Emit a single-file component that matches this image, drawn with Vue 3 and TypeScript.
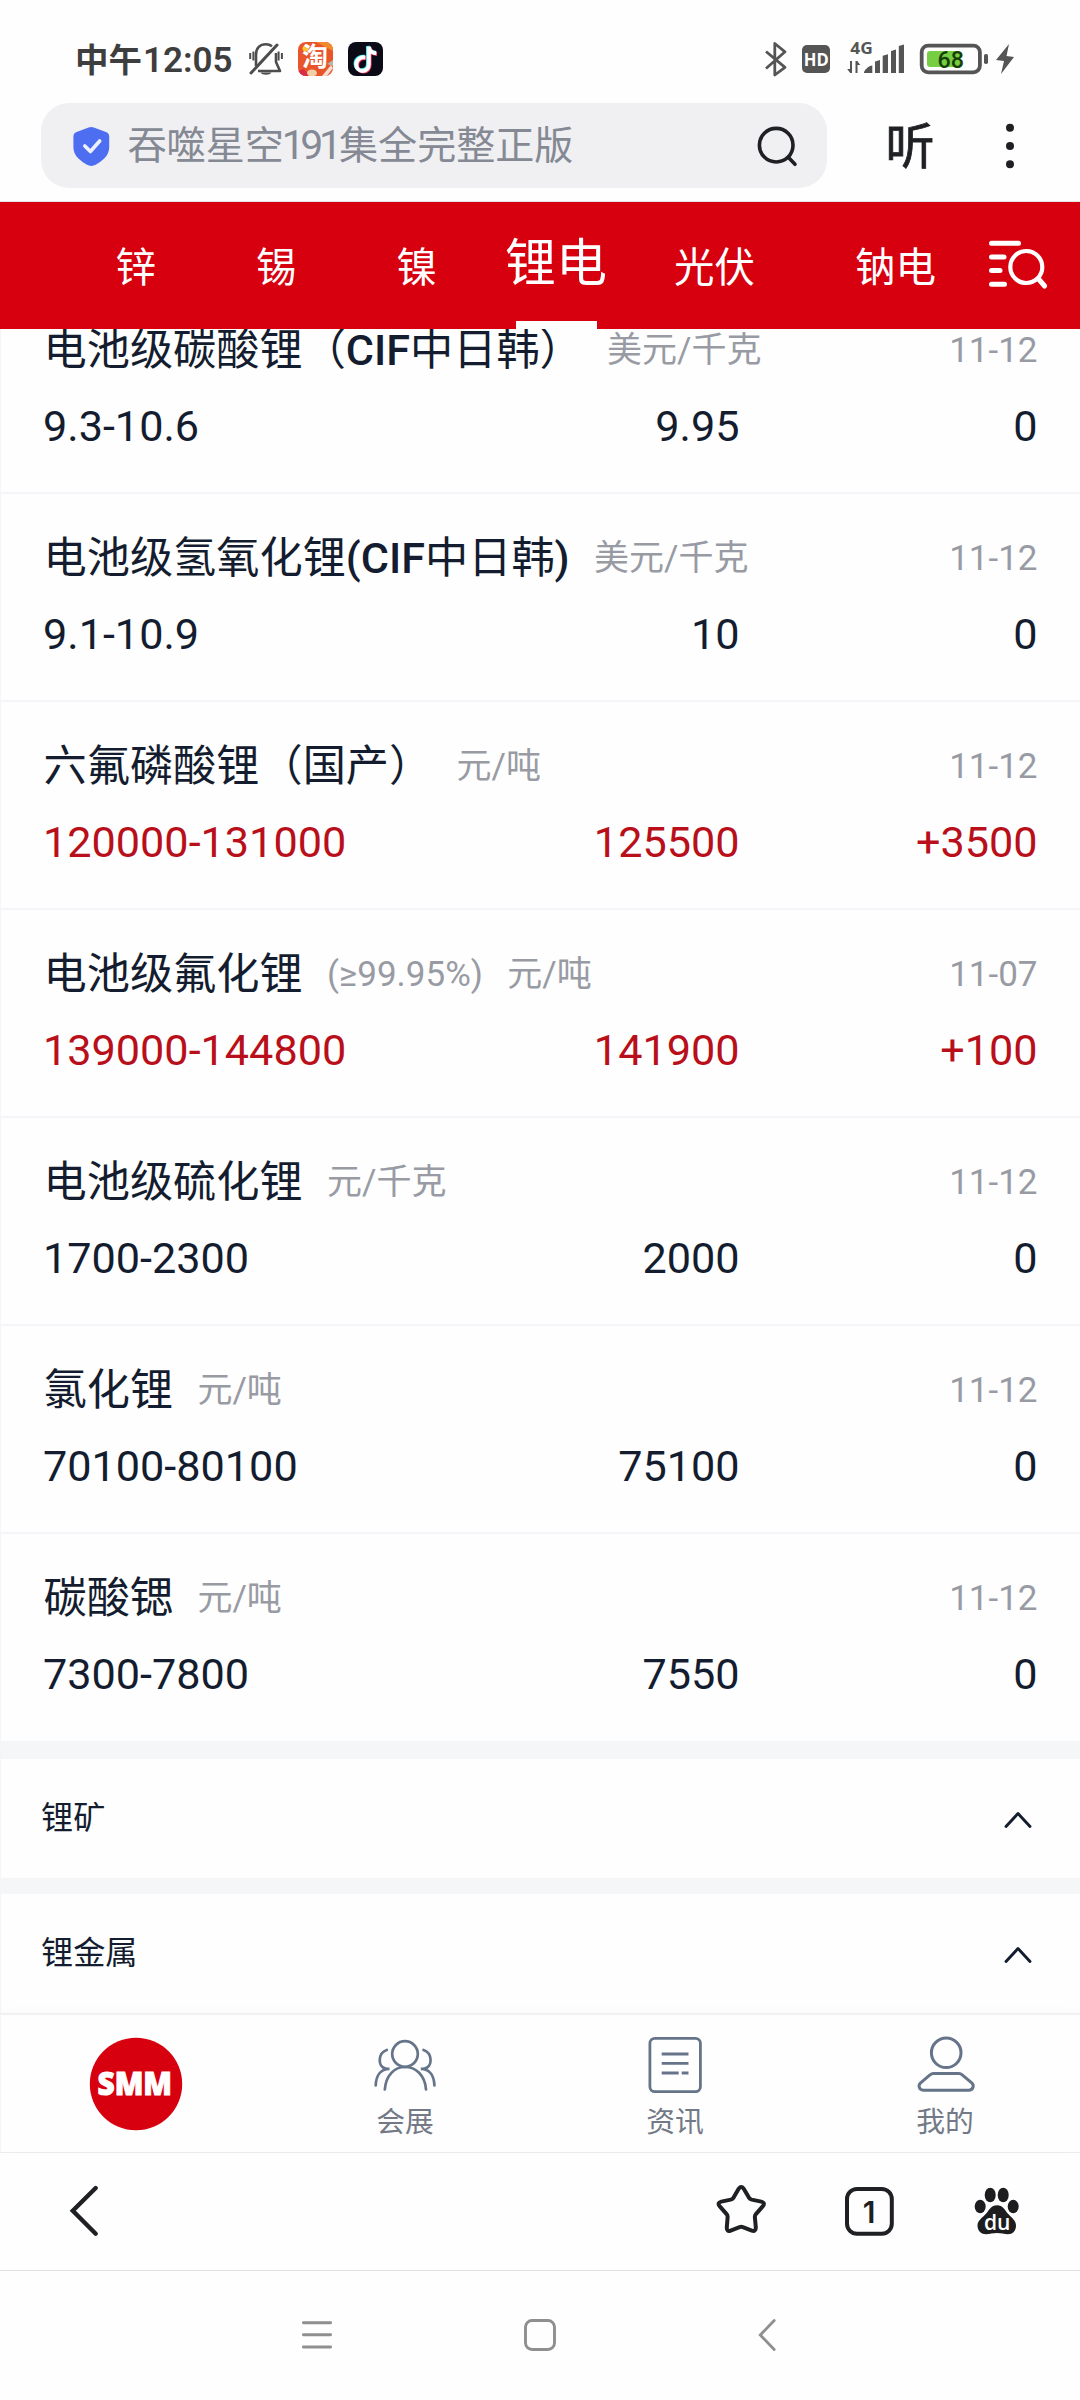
<script setup lang="ts">
interface PriceRow {
  name: string
  spec?: string
  unit: string
  date: string
  range: string
  average: string
  change: string
  rising?: boolean
}

const tabs: string[] = ['锌', '锡', '镍', '锂电', '光伏', '钠电']
const activeTab = '锂电'

const rows: PriceRow[] = [
  { name: '电池级碳酸锂（CIF中日韩）', unit: '美元/千克', date: '11-12', range: '9.3-10.6', average: '9.95', change: '0' },
  { name: '电池级氢氧化锂(CIF中日韩)', unit: '美元/千克', date: '11-12', range: '9.1-10.9', average: '10', change: '0' },
  { name: '六氟磷酸锂（国产）', unit: '元/吨', date: '11-12', range: '120000-131000', average: '125500', change: '+3500', rising: true },
  { name: '电池级氟化锂', spec: '(≥99.95%)', unit: '元/吨', date: '11-07', range: '139000-144800', average: '141900', change: '+100', rising: true },
  { name: '电池级硫化锂', unit: '元/千克', date: '11-12', range: '1700-2300', average: '2000', change: '0' },
  { name: '氯化锂', unit: '元/吨', date: '11-12', range: '70100-80100', average: '75100', change: '0' },
  { name: '碳酸锶', unit: '元/吨', date: '11-12', range: '7300-7800', average: '7550', change: '0' },
]

const sections: string[] = ['锂矿', '锂金属']

// Latin runs in product names are set heavier than the Chinese characters
function nameParts(name: string): { text: string; latin: boolean }[] {
  return name
    .split(/([A-Za-z()]+)/)
    .filter(Boolean)
    .map((text) => ({ text, latin: /[A-Za-z()]/.test(text) }))
}
</script>

<template>
  <div class="screen">
    <header class="status">
      <div class="status-left">
        <span class="time">中午<span class="clock">12:05</span></span>
        <svg class="bell" width="34" height="34" viewBox="249 42 34 34" fill="none" stroke="#4d4d4d" stroke-width="2.6">
          <path d="M256 66V55C256 48 260 44.200 266 44.200C268.500 44.200 270.500 45 272 46.200M276 53V62L280 71H258" stroke-linejoin="round" />
          <path d="M251 73L277 45" stroke-linecap="round" stroke-width="3" />
          <path d="M250.200 53v6M253.400 51.500v9M278.600 51.500v9M281.900 53v6" stroke-width="2" />
          <path d="M260.500 72.500h11c-1.500 3-9.500 3-11 0z" fill="#4d4d4d" stroke="none" />
        </svg>
        <svg class="app" width="35" height="34" viewBox="0 0 35 34">
          <defs><clipPath id="appClip"><rect width="35" height="34" rx="8" /></clipPath></defs>
          <g clip-path="url(#appClip)">
            <rect width="35" height="34" fill="#e8552b" />
            <path d="M18 0H35V9z" fill="#f08a2c" />
            <circle cx="7.500" cy="6.500" r="3" fill="#fbc531" />
            <path d="M0 29l6-2 5 7H0z" fill="#d92b45" />
            <ellipse cx="14" cy="31" rx="5" ry="3.500" fill="#f2cfa4" />
            <path d="M24 34l9-11 2 3-6 8z" fill="#f7dcd0" />
            <path d="M29 22l6-4v6z" fill="#b9b2ae" />
          </g>
          <text x="4" y="24" font-size="26" fill="#fff" class="cjk-heavy">淘</text>
        </svg>
        <svg class="app" width="35" height="34" viewBox="0 0 35 34">
          <rect width="35" height="34" rx="8" fill="#0b0b17" />
          <g fill="none" stroke-width="4">
            <path d="M16.500 14.800c-5-.8-9 2.300-9 6.900 0 4 3 6.500 6.300 6.500 4 0 6.200-3 6.200-6.600V4c.6 4 3.500 6.300 7.500 6.500" stroke="#25e5e8" />
            <path d="M18.100 16.200c-5-.8-9 2.300-9 6.900 0 4 3 6.500 6.300 6.500 4 0 6.200-3 6.200-6.600V5.500c.6 4 3.500 6.300 7.500 6.500" stroke="#f5355d" />
            <path d="M17.300 15.500c-5-.8-9 2.300-9 6.900 0 4 3 6.500 6.300 6.500 4 0 6.200-3 6.200-6.600V4.700c.6 4 3.500 6.300 7.500 6.500" stroke="#fff" />
          </g>
        </svg>
      </div>
      <div class="status-right">
        <svg width="254" height="54" viewBox="762 32 254 54">
          <path d="M766 51.500L785 67.300L774.800 75V43.500L785 51.800L766 68.500" fill="none" stroke="#555" stroke-width="2.800" stroke-linejoin="round" />
          <rect x="802" y="45" width="28" height="28" rx="5" fill="#555" />
          <text x="803.800" y="66" font-size="18.500" textLength="25" lengthAdjust="spacingAndGlyphs" class="latin-bold" fill="#fff">HD</text>
          <text x="850.300" y="54.300" font-size="15.500" textLength="22.500" lengthAdjust="spacingAndGlyphs" class="latin-bold" fill="#555">4G</text>
          <path d="M852 61v12h-1.800l-3-4h2.800v-8zM855.500 73V61h1.800l3 4h-2.800v8z" fill="#555" />
          <path d="M864 73c0-3 5-7.500 8.300-7.500V73zM875 73V61.500l5-1.500v13zM882.700 73V55.700l5.300-1.500V73zM891 73V51l5-1.500V73zM898.800 73V46l5.200-1.600V73z" fill="#555" />
          <rect x="921.700" y="45.600" width="58.200" height="26.700" rx="6.500" fill="none" stroke="#555" stroke-width="3.800" />
          <rect x="927" y="51" width="33" height="16" rx="3" fill="#76cf42" />
          <rect x="984" y="54" width="4" height="10" rx="1.700" fill="#555" />
          <text x="937.500" y="68" font-size="23" textLength="26.500" lengthAdjust="spacingAndGlyphs" class="battery-text" fill="#173f05">68</text>
          <path d="M1009 44l-13 16 8 1-3 13 13-17-7.500-1z" fill="#555" />
        </svg>
      </div>
    </header>

    <div class="browser-top">
      <div class="search">
        <svg width="36" height="40" viewBox="73 126 36 40">
          <path d="M88.600 127.500q2.600-.9 5.200 0L106 132q3.200 1.200 3.200 4.600V147q0 7-5 11.500-4 3.800-8.500 6.300-4.400 2.200-8.800 0-4.500-2.500-8.500-6.300-5-4.500-5-11.500v-10.400q0-3.400 3.200-4.600z" fill="#4e6ef2" />
          <path d="M84.800 146l5.600 5.500L99.700 141" fill="none" stroke="#edf0fd" stroke-width="3.600" stroke-linecap="round" stroke-linejoin="round" />
        </svg>
        <span class="query">吞噬星空<span class="num">191</span>集全完整正版</span>
        <svg width="42" height="42" viewBox="756 124 42 42" fill="none" stroke="#1f2024" stroke-width="3.600" stroke-linecap="round">
          <circle cx="776.200" cy="144.200" r="16.800" />
          <path d="M788.500 156.500l6.500 6.800" />
        </svg>
      </div>
      <span class="listen">听</span>
      <svg class="dots" width="12" height="48" viewBox="0 0 12 48" fill="#1f2024">
        <circle cx="6" cy="5.700" r="4" /><circle cx="6" cy="24" r="4" /><circle cx="6" cy="42.300" r="4" />
      </svg>
    </div>

    <nav class="tabs">
      <div v-for="tab in tabs" :key="tab" class="tab" :class="{ active: tab === activeTab }">
        <span>{{ tab }}</span>
      </div>
      <svg class="filter" width="62" height="52" viewBox="988 239 62 52" fill="none" stroke="#fff" stroke-linecap="round">
        <path d="M992.500 243.300h27M992.500 257h12.500M992.500 270.500h8.500M992.500 284.300h13" stroke-width="5" />
        <circle cx="1027.300" cy="267" r="16" stroke-width="4.200" />
        <path d="M1040 279.500l5.600 6.500" stroke-width="5" />
      </svg>
    </nav>

    <main class="content">
      <section v-for="row in rows" :key="row.name" class="row">
        <div class="line">
          <span class="name"><span v-for="(part, i) in nameParts(row.name)" :key="i" :class="{ latin: part.latin }">{{ part.text }}</span></span>
          <span v-if="row.spec" class="unit">{{ row.spec }}</span>
          <span class="unit">{{ row.unit }}</span>
          <span class="date">{{ row.date }}</span>
        </div>
        <div class="line values" :class="{ rising: row.rising }">
          <span class="range">{{ row.range }}</span>
          <span class="average">{{ row.average }}</span>
          <span class="change">{{ row.change }}</span>
        </div>
      </section>
      <section v-for="title in sections" :key="title" class="fold">
        <span class="fold-title">{{ title }}</span>
        <svg width="28" height="18" viewBox="0 0 28 18" fill="none" stroke="#141d2f" stroke-width="2.900" stroke-linecap="round" stroke-linejoin="round">
          <path d="M2 16.500L14 3.500l12 13" />
        </svg>
      </section>
    </main>

    <nav class="site-nav">
      <div class="site-item">
        <svg width="94" height="94" viewBox="88 2037 94 94">
          <circle cx="135" cy="2084" r="46.200" fill="#d7000f" />
          <text x="96.500" y="2095.300" font-size="32" textLength="74.500" lengthAdjust="spacingAndGlyphs" class="logo-text">SMM</text>
        </svg>
      </div>
      <div class="site-item">
        <svg width="64" height="58" viewBox="373.500 2036 64 58" fill="none" stroke="#66748a" stroke-width="2.700" stroke-linecap="round">
          <circle cx="405.500" cy="2054" r="12.800" />
          <path d="M385.300 2089.500C386.500 2075 395 2067 405.500 2067S425.500 2075 426.500 2089.500" />
          <path d="M387.300 2050c-9 3-9.500 17-1 18.500 1 .2 2.500.3 3.700.3-9 0-13.500 7-13.800 16.700" />
          <path d="M424 2050c9 3 9.500 17 1 18.500-1 .2-2.500.3-3.700.3 9 0 13.300 7 13.600 16.700" />
        </svg>
        <span>会展</span>
      </div>
      <div class="site-item">
        <svg width="64" height="58" viewBox="643.300 2036 64 58" fill="none" stroke="#66748a" stroke-width="2.800">
          <rect x="650.200" y="2038.300" width="50.500" height="53.400" rx="5" />
          <path d="M662 2054h26.800M662 2063.400h26.800M662 2073h17M682 2073h6.800" />
        </svg>
        <span>资讯</span>
      </div>
      <div class="site-item">
        <svg width="64" height="58" viewBox="913.500 2036 64 58" fill="none" stroke="#66748a" stroke-width="3">
          <circle cx="946.700" cy="2052.800" r="14.800" />
          <path d="M934 2073.500h25.500q1.700 0 3.200 1.300l9.500 8q2 1.800 1.400 4.200-.9 3.200-4.300 3.200h-45.400q-3.400 0-4.200-3.200-.6-2.400 1.400-4.200l9.400-8q1.500-1.300 3.500-1.300z" />
        </svg>
        <span>我的</span>
      </div>
    </nav>

    <nav class="browser-bottom">
      <svg class="back" width="34" height="54" viewBox="67 2184 34 54" fill="none" stroke="#1f2024" stroke-width="4.400" stroke-linecap="round" stroke-linejoin="miter">
        <path d="M95.700 2188L72.800 2210.800L95.700 2233.700" />
      </svg>
      <svg class="star" width="52" height="52" viewBox="715 2183 52 52" fill="none" stroke="#1f2024" stroke-width="4" stroke-linejoin="round">
        <path d="M738.800 2188.600q2.400-3.200 4.800 0l5.300 9q1 1.500 2.800 2l9.500 2q4.300 1.200 1.700 4.500l-7 8q-1.200 1.500-1 3.300l.9 10q0 4.700-4 3.200l-9-3.500q-1.600-.6-3.200 0l-9 3.500q-4 1.500-3.800-3.200l.8-10q.2-1.800-1-3.300l-7-8q-2.600-3.300 1.700-4.500l9.500-2q1.800-.5 2.800-2z" />
      </svg>
      <svg class="pages" width="52" height="52" viewBox="843 2185 52 52">
        <rect x="847" y="2189" width="44.800" height="44.800" rx="10" fill="none" stroke="#1f2024" stroke-width="4" />
        <text x="869" y="2222.500" text-anchor="middle" font-size="30" class="page-count">1</text>
      </svg>
      <svg class="paw" width="48" height="50" viewBox="973 2186 48 50" fill="#1d1d1f">
        <ellipse cx="990.200" cy="2195" rx="5.500" ry="7.300" />
        <ellipse cx="1003.200" cy="2195" rx="5.500" ry="7.300" />
        <ellipse cx="980.200" cy="2206.500" rx="5.500" ry="6.800" />
        <ellipse cx="1013.200" cy="2206.500" rx="5.500" ry="6.800" />
        <path d="M997 2205.200c6 0 8 5 11 8.500 4 4.500 8 6.500 8 12 0 5-3.500 8.500-8 8.500-4 0-6.500-1.200-11-1.200s-7 1.200-11 1.200c-4.500 0-8.500-3.500-8.500-8.500 0-5.500 4.500-7.500 8.500-12 3-3.500 5-8.500 11-8.500z" />
        <text x="984" y="2230" font-size="21.500" textLength="26.500" lengthAdjust="spacingAndGlyphs" class="du" fill="#fff">du</text>
      </svg>
    </nav>

    <nav class="system-nav">
      <svg width="34" height="36" viewBox="300 2317 34 36" stroke="#8f8f8f" stroke-width="2.900" stroke-linecap="round">
        <path d="M303.400 2322.700h27.200M303.400 2334.700h27.200M303.400 2347h27.200" />
      </svg>
      <svg class="home" width="34" height="34" viewBox="0 0 34 34" fill="none" stroke="#8f8f8f" stroke-width="2.900">
        <rect x="2.500" y="2.500" width="29" height="29" rx="6.500" />
      </svg>
      <svg class="sys-back" width="20" height="36" viewBox="757 2317 20 36" fill="none" stroke="#8f8f8f" stroke-width="2.800" stroke-linecap="round">
        <path d="M774.200 2320.500L760.300 2335L774.200 2349.500" />
      </svg>
    </nav>
  </div>
</template>

<style>
body {
  margin: 0;
  background: #fefefe;
}
</style>

<style scoped>
.screen {
  width: 1080px;
  height: 2400px;
  overflow: hidden;
  display: flex;
  flex-direction: column;
  background: #fefefe;
  font-family: Roboto, "Noto Sans CJK SC", sans-serif;
  color: #141d2f;
}
svg {
  display: block;
  flex: none;
  overflow: visible;
}
.status {
  height: 103px;
  flex: none;
  box-sizing: border-box;
  padding: 32px 64px 0 75px;
  display: flex;
  justify-content: space-between;
}
.status-left {
  display: flex;
  align-items: center;
  height: 54px;
}
.time {
  width: 174px;
  font: 700 33.500px/38px "Noto Sans CJK SC", sans-serif;
  color: #3e3e3e;
  white-space: nowrap;
}
.clock {
  font-family: Roboto, sans-serif;
  font-size: 35px;
  font-weight: 600;
  margin-left: 1px;
}
.app {
  margin-left: 15px;
}
.cjk-heavy {
  font-family: "Noto Sans CJK SC", sans-serif;
  font-weight: 700;
}
.latin-bold {
  font-family: "Open Sans", sans-serif;
  font-weight: 700;
}
.battery-text {
  font-family: Roboto, sans-serif;
  font-weight: 500;
}
.browser-top {
  height: 98px;
  flex: none;
  border-bottom: 1px solid #e4e4e6;
  display: flex;
  align-items: flex-start;
  padding-left: 41px;
}
.search {
  width: 786px;
  height: 85px;
  box-sizing: border-box;
  border-radius: 28px;
  background: #f0f0f3;
  display: flex;
  align-items: center;
  padding: 0 29px 0 32px;
}
.query {
  margin-left: 18.500px;
  flex: 1;
  white-space: nowrap;
  font: 400 39.100px/80px "Noto Sans CJK SC", sans-serif;
  padding-bottom: 4px;
  color: #858994;
}
.num {
  font-family: Roboto, sans-serif;
  font-size: 41px;
  letter-spacing: -4.500px;
  margin-right: 1.500px;
  margin-left: -2px;
}
.listen {
  margin-left: 58.500px;
  width: 50px;
  font: 400 49px/79px "Noto Sans CJK SC", sans-serif;
  -webkit-text-stroke: 0.8px #1f2024;
  color: #1f2024;
}
.dots {
  margin: 19px 0 0 68.500px;
}
.tabs {
  height: 127px;
  flex: none;
  background: #d7000f;
  color: #fff;
  display: grid;
  grid-template-columns: 140.500px 140.500px 140.500px 138px 179px 183px 1fr;
  padding-left: 65.500px;
  position: relative;
  z-index: 1;
}
.tab {
  display: flex;
  flex-direction: column;
  align-items: center;
  font: 400 40.500px/40px "Noto Sans CJK SC", sans-serif;
  padding-top: 43px;
}
.active {
  font-size: 51px;
  line-height: 50px;
  padding-top: 32px;
}
.active::after {
  content: "";
  width: 81px;
  height: 8px;
  background: #fff;
  margin-top: 37px;
}
.filter {
  margin: 37px 0 0 -0.500px;
}
.content {
  height: 1727px;
  flex: none;
  border-left: 1px solid #f4f5f9;
  box-sizing: border-box;
  margin-top: -43px;
}
.row {
  height: 208px;
  box-sizing: border-box;
  border-bottom: 2px solid #f4f5f9;
  padding: 35px 42.500px 0 42px;
}
.row:nth-child(7) {
  height: 207px;
  border: 0;
}
.line {
  display: flex;
  height: 60px;
  line-height: 60px;
  white-space: nowrap;
}
.name {
  font-size: 43.200px;
  padding-left: 0.500px;
}
.latin {
  font-weight: 500;
}
.unit {
  margin-left: 24.300px;
  font-size: 35px;
  line-height: 59px;
  color: #989ba3;
}
.date {
  margin-left: auto;
  font-size: 35px;
  color: #989ba3;
}
.values {
  margin-top: 16px;
  font-size: 43.200px;
}
.range {
  width: 440px;
}
.average {
  width: 256.500px;
  text-align: right;
}
.change {
  flex: 1;
  text-align: right;
}
.rising {
  color: #b90f1a;
}
.fold {
  height: 135px;
  box-sizing: border-box;
  border-top: 16px solid #f5f6f8;
  padding: 0 48px 0 40px;
  display: flex;
  align-items: center;
  justify-content: space-between;
  font-size: 32.200px;
}
.fold-title {
  padding-bottom: 8px;
}
.fold:nth-child(8) {
  height: 137px;
  border-top-width: 18px;
}
.site-nav {
  height: 140px;
  flex: none;
  box-sizing: border-box;
  border-top: 2px solid #f1f1f2;
  border-bottom: 1px solid #ebebec;
  border-left: 1px solid #f4f5f9;
  display: grid;
  grid-template-columns: 269px repeat(3, 270px);
  background: #fefefe;
  position: relative;
  box-shadow: 0 -3px 8px rgba(0, 0, 0, 0.02);
}
.site-item {
  display: flex;
  flex-direction: column;
  align-items: center;
  padding-top: 21px;
  font-size: 28.800px;
  line-height: 40px;
  color: #737986;
}
.site-item svg {
  margin-bottom: 8px;
}
.site-item:first-child svg {
  margin-top: 1px;
}
.logo-text {
  font-family: "Open Sans", sans-serif;
  font-weight: 800;
  fill: #fff;
  stroke: #fff;
  stroke-width: 1px;
}
.browser-bottom {
  height: 117px;
  flex: none;
  border-bottom: 1px solid #e0e0e1;
  display: flex;
  align-items: flex-start;
  padding-left: 67px;
}
.back {
  margin-top: 31px;
}
.star {
  margin: 30px 0 0 614px;
}
.pages {
  margin: 32px 0 0 76px;
}
.paw {
  margin: 33px 0 0 78px;
}
.page-count {
  font-family: Inter, sans-serif;
  font-weight: 600;
  fill: #1f2024;
}
.du {
  font-family: "Open Sans", sans-serif;
  font-weight: 600;
}
.system-nav {
  flex: 1;
  display: flex;
  align-items: flex-start;
  padding: 46px 0 0 300px;
}
.home {
  margin: 1px 0 0 189px;
}
.sys-back {
  margin-left: 200px;
}
</style>
